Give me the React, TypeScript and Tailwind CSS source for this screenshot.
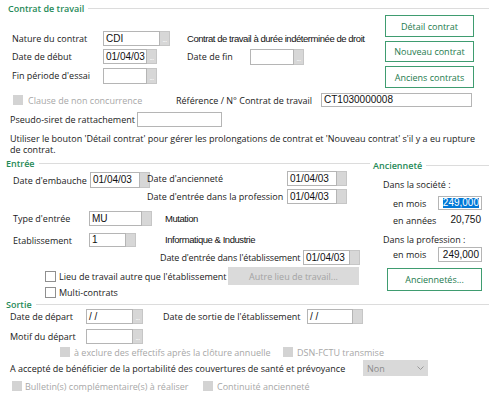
import React from "react";

const VF = "font-['Liberation_Sans',Arial,sans-serif] text-[#111]";
const CAP = "text-[9.5px] tracking-[-0.45px]";

function Field({
  cls,
  value,
  btn = true,
  dots = false,
  right = false,
  h = "h-[15px]",
}: {
  cls: string;
  value?: React.ReactNode;
  btn?: boolean;
  dots?: boolean;
  right?: boolean;
  h?: string;
}) {
  return (
    <div className={`flex shrink-0 ${h} ${cls}`}>
      <div
        className={`flex-1 min-w-0 border border-[#b5b5b5] bg-white flex items-center px-[2px] overflow-hidden whitespace-nowrap text-[10px] ${VF} ${
          right ? "justify-end" : ""
        }`}
      >
        {value}
      </div>
      {btn && (
        <div className="w-[10px] shrink-0 bg-[#d7d7d7] border border-[#c6c6c6] border-l-0 flex items-end justify-center pb-[2px]">
          {dots && <span className="text-[7px] leading-none text-white tracking-[-0.5px]">...</span>}
        </div>
      )}
    </div>
  );
}

function Check({ disabled = false }: { disabled?: boolean }) {
  return disabled ? (
    <div className="w-[10px] h-[10px] shrink-0 bg-[#d3d3d3]" />
  ) : (
    <div className="w-[11px] h-[11px] shrink-0 bg-white border border-[#8f8f8f]" />
  );
}

function Header({ title, cls = "" }: { title: string; cls?: string }) {
  return (
    <div className={`flex items-center ${cls}`}>
      <span className="text-[#1f8a58] font-semibold whitespace-nowrap">{title}</span>
      <div className="flex-1 h-px bg-[#dcdcdc] ml-[4px]" />
    </div>
  );
}

function GreenBtn({ label, cls }: { label: string; cls: string }) {
  return (
    <div
      className={`flex items-center justify-center border border-[#3f9c70] bg-white text-[#1d7a4d] ${cls}`}
    >
      {label}
    </div>
  );
}

export default function App() {
  return (
    <div className="w-[489px] h-[393px] overflow-hidden bg-white text-[9px] leading-none text-[#1a1a1a] font-['Open_Sans','Noto_Sans',sans-serif]">
      {/* Contrat de travail */}
      <Header title="Contrat de travail" cls="h-[15px] pl-[8px] pt-[2px]" />
      <div className="flex h-[78px]">
        <div className="w-[385px] flex flex-col">
          <div className="flex items-center h-[15px] mt-[16px] pl-[12px]">
            <span className="w-[91px] shrink-0">Nature du contrat</span>
            <Field cls="w-[67px]" value="CDI" dots />
            <span className={`ml-[17px] whitespace-nowrap ${CAP} ${VF}`}>
              Contrat de travail à durée indéterminée de droit
            </span>
          </div>
          <div className="flex items-center h-[15px] mt-[3px] pl-[12px]">
            <span className="w-[91px] shrink-0">Date de début</span>
            <Field cls="w-[54px]" value="01/04/03" dots />
            <span className="ml-[30px] w-[63px] shrink-0">Date de fin</span>
            <Field cls="w-[54px]" h="h-[16px]" dots />
          </div>
          <div className="flex items-center h-[15px] mt-[4px] pl-[12px]">
            <span className="w-[91px] shrink-0">Fin période d'essai</span>
            <Field cls="w-[54px]" h="h-[16px]" dots />
          </div>
        </div>
        <div className="w-[89px] flex flex-col gap-[4px]">
          <GreenBtn label="Détail contrat" cls="h-[22px]" />
          <GreenBtn label="Nouveau contrat" cls="h-[21px]" />
          <GreenBtn label="Anciens contrats" cls="h-[22px]" />
        </div>
      </div>

      <div className="flex items-center h-[14px] pl-[13px]">
        <div className="w-[163px] shrink-0 flex items-center">
          <Check disabled />
          <span className="ml-[5px] text-[#a7a7a7]">Clause de non concurrence</span>
        </div>
        <span className="w-[145px] shrink-0">Référence / N° Contrat de travail</span>
        <Field cls="w-[151px]" h="h-[14px]" value="CT1030000008" btn={false} />
      </div>

      <div className="flex items-center h-[15px] mt-[5px] pl-[10px]">
        <span className="w-[127px] shrink-0">Pseudo-siret de rattachement</span>
        <Field cls="w-[85px]" btn={false} />
      </div>

      <p className="mt-[6px] pl-[10px] leading-[11px]">
        Utiliser le bouton 'Détail contrat' pour gérer les prolongations de contrat et 'Nouveau contrat' s'il y a eu rupture
        <br />
        de contrat.
      </p>

      {/* Entrée / Ancienneté */}
      <div className="flex mt-[3px]">
        <div className="w-[370px] shrink-0 flex flex-col">
          <Header title="Entrée" cls="h-[11px] pl-[6px]" />
          <div className="flex">
            <div className="w-[147px] shrink-0 pl-[13px] flex items-center h-[16px] mt-[3px]">
              <span className="w-[77px] shrink-0">Date d'embauche</span>
              <Field cls="w-[60px]" h="h-[16px]" value="01/04/03" />
            </div>
            <div className="flex flex-col">
              <div className="flex items-center h-[15px] mt-[2px]">
                <span className="w-[140px] shrink-0">Date d'ancienneté</span>
                <Field cls="w-[60px]" value="01/04/03" />
              </div>
              <div className="flex items-center h-[15px] mt-[3px]">
                <span className="w-[140px] shrink-0">Date d'entrée dans la profession</span>
                <Field cls="w-[60px]" value="01/04/03" />
              </div>
            </div>
          </div>
          <div className="flex items-center h-[15px] mt-[7px] pl-[13px]">
            <span className="w-[76px] shrink-0">Type d'entrée</span>
            <Field cls="w-[63px]" value="MU" />
            <span className={`ml-[13px] ${CAP} ${VF}`}>Mutation</span>
          </div>
          <div className="flex items-center h-[14px] mt-[7px] pl-[13px]">
            <span className="w-[76px] shrink-0">Etablissement</span>
            <Field cls="w-[47px]" h="h-[14px]" value="1" />
            <span className={`ml-[29px] ${CAP} ${VF}`}>Informatique &amp; Industrie</span>
          </div>
          <div className="flex items-center h-[15px] mt-[3px] pl-[160px]">
            <span className="w-[143px] shrink-0 whitespace-nowrap tracking-[-0.15px]">
              Date d'entrée dans l'établissement
            </span>
            <Field cls="w-[57px]" value="01/04/03" />
          </div>
          <div className="flex items-center h-[18px] mt-[2px] pl-[45px]">
            <div className="w-[183px] shrink-0 flex items-center">
              <Check />
              <span className="ml-[3px]">Lieu de travail autre que l'établissement</span>
            </div>
            <div className="w-[131px] h-[18px] bg-[#dadada] flex items-center justify-center text-[#a3a3a3]">
              Autre lieu de travail...
            </div>
          </div>
          <div className="flex items-center h-[11px] mt-[2px] pl-[45px]">
            <Check />
            <span className="ml-[3px]">Multi-contrats</span>
          </div>
        </div>

        <div className="flex-1 flex flex-col">
          <Header title="Ancienneté" cls="h-[10px] mt-[2px] pl-[3px]" />
          <div className="h-[12px] mt-[8px] pl-[13px] flex items-center">Dans la société :</div>
          <div className="flex items-center h-[14px] mt-[6px] pl-[23px]">
            <span className="w-[45px] shrink-0">en mois</span>
            <Field
              cls="w-[44px]"
              h="h-[14px]"
              btn={false}
              right
              value={<span className="bg-[#0078d7] text-white">249,000</span>}
            />
          </div>
          <div className="flex items-center justify-between w-[113px] h-[12px] mt-[4px] pl-[23px]">
            <span>en années</span>
            <span className={`text-[10px] ${VF} pr-[2px]`}>20,750</span>
          </div>
          <div className="h-[12px] mt-[7px] pl-[13px] flex items-center">Dans la profession :</div>
          <div className="flex items-center h-[15px] mt-[2px] pl-[23px]">
            <span className="w-[45px] shrink-0">en mois</span>
            <Field cls="w-[44px]" btn={false} right value="249,000" />
          </div>
          <GreenBtn label="Anciennetés..." cls="h-[23px] mt-[6px] ml-[17px] w-[95px]" />
        </div>
      </div>

      {/* Sortie */}
      <Header title="Sortie" cls="h-[9px] mt-[2px] pl-[6px]" />
      <div className="flex items-center h-[15px] pl-[10px]">
        <span className="w-[76px] shrink-0">Date de départ</span>
        <Field cls="w-[57px]" value="/ /" dots />
        <span className="ml-[20px] w-[144px] shrink-0">Date de sortie de l'établissement</span>
        <Field cls="w-[56px]" value="/ /" />
      </div>
      <div className="flex items-center h-[15px] mt-[5px] pl-[10px]">
        <span className="w-[76px] shrink-0">Motif du départ</span>
        <Field cls="w-[57px]" dots />
      </div>
      <div className="flex items-center h-[10px] mt-[3px] pl-[60px] text-[#a7a7a7]">
        <div className="w-[223px] shrink-0 flex items-center">
          <Check disabled />
          <span className="ml-[4px]">à exclure des effectifs après la clôture annuelle</span>
        </div>
        <Check disabled />
        <span className="ml-[4px]">DSN-FCTU transmise</span>
      </div>
      <div className="flex items-center h-[16px] mt-[3px] pl-[10px]">
        <span className="w-[353px] shrink-0">
          A accepté de bénéficier de la portabilité des couvertures de santé et prévoyance
        </span>
        <div className="w-[65px] h-[16px] bg-[#d9d9d9] flex items-center justify-between pl-[4px] pr-[4px] text-[#8a8a8a]">
          <span>Non</span>
          <svg width="7" height="4" viewBox="0 0 7 4">
            <path d="M0.5 0.5 L3.5 3.5 L6.5 0.5" fill="none" stroke="#9a9a9a" strokeWidth="1" />
          </svg>
        </div>
      </div>
      <div className="flex items-center h-[10px] mt-[5px] pl-[12px] text-[#a7a7a7]">
        <div className="w-[191px] shrink-0 flex items-center">
          <Check disabled />
          <span className="ml-[3px]">Bulletin(s) complémentaire(s) à réaliser</span>
        </div>
        <Check disabled />
        <span className="ml-[4px]">Continuité ancienneté</span>
      </div>
    </div>
  );
}
